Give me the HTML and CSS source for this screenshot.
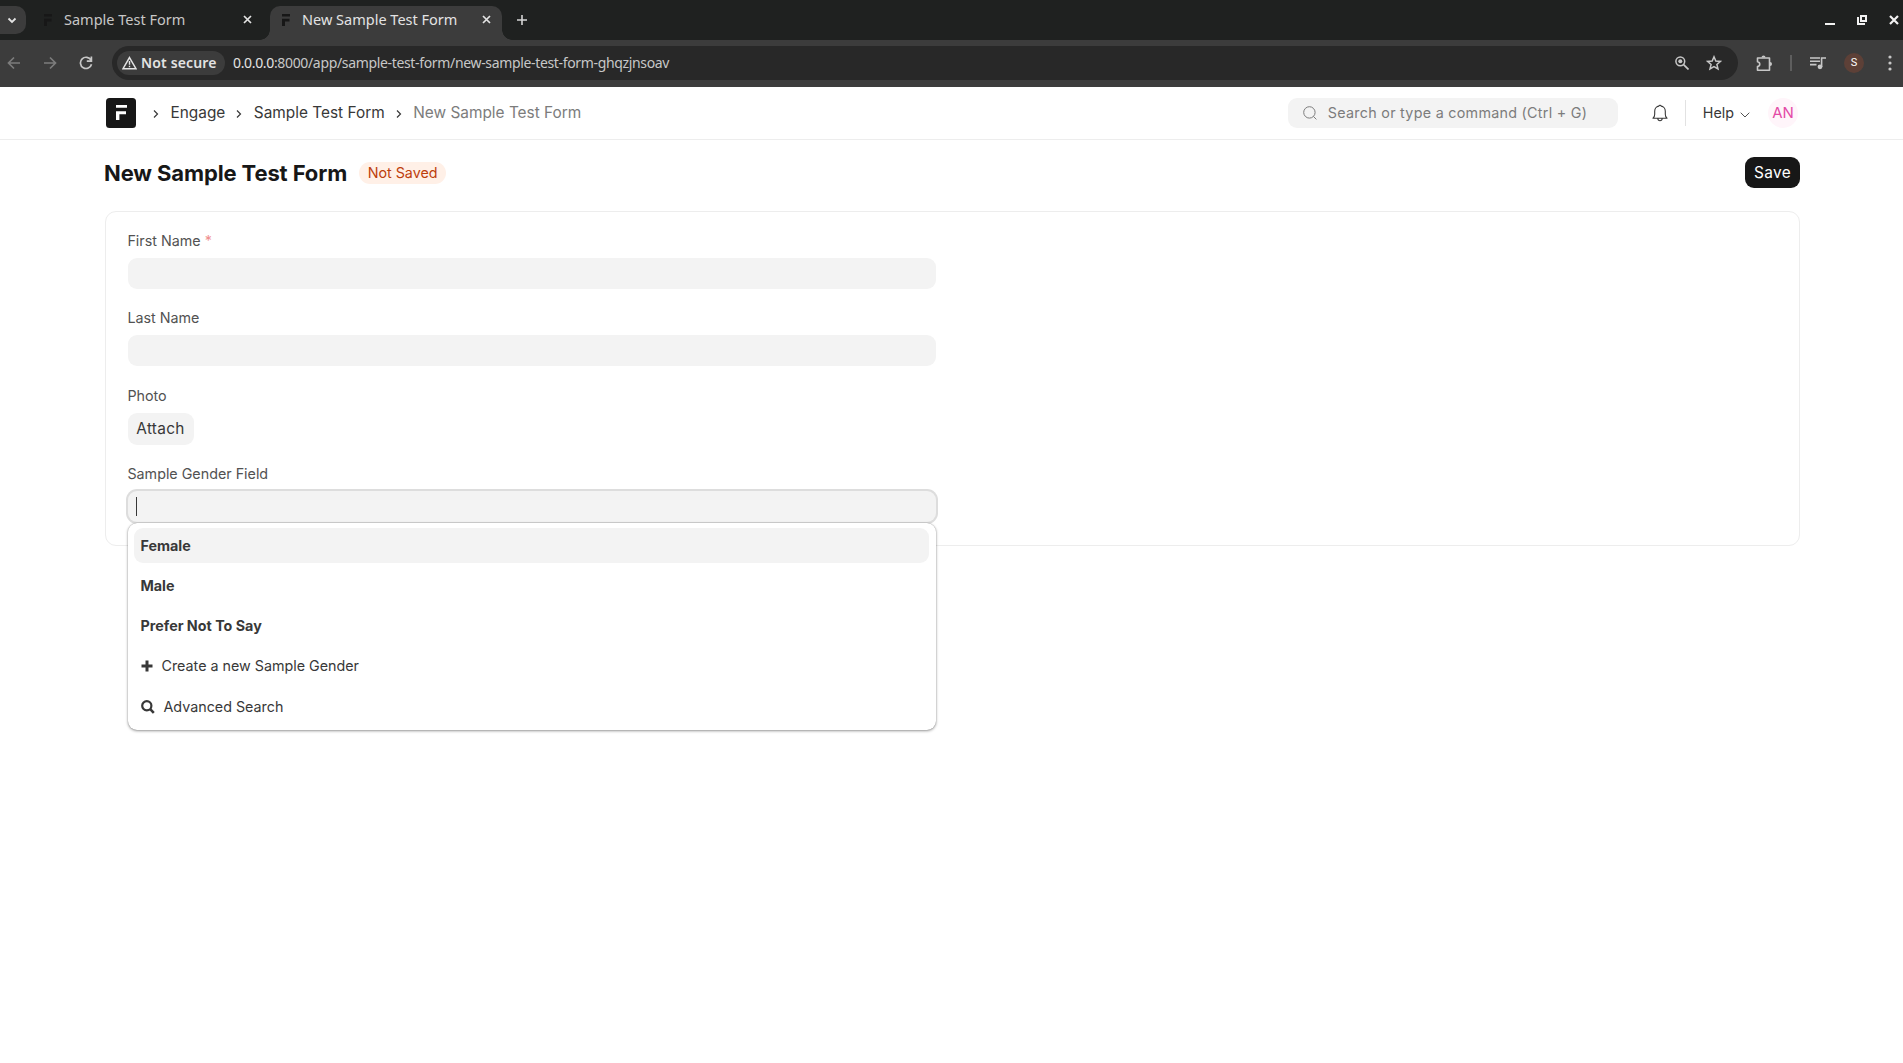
FILE: index.html
```html
<!DOCTYPE html>
<html lang="en">
<head>
  <meta charset="UTF-8">
  <title>New Sample Test Form</title>
  <link rel="stylesheet" href="styles.css">
</head>
<body>

  <div class="browser">
    <div class="tab-strip">
      <button class="tab-search">
        <svg width="10" height="7" viewBox="0 0 10 7"><path d="M1.5 1.5 5 5l3.5-3.5" fill="none" stroke="#e3e3e3" stroke-width="1.8"/></svg>
      </button>
      <div class="tab">
        <svg class="favicon" width="9" height="12" viewBox="0 0 9 12"><path d="M0 0h8v2.6H0zM0 4.8h7.5v2.6H3V12H0z" fill="#171717"/></svg>
        <span class="tab-title">Sample Test Form</span>
        <svg class="tab-close" width="9" height="9" viewBox="0 0 9 9"><path d="M1 1l7 7M8 1L1 8" stroke="#e3e3e3" stroke-width="1.7"/></svg>
      </div>
      <div class="tab active">
        <svg class="favicon" width="9" height="12" viewBox="0 0 9 12"><path d="M0 0h8v2.6H0zM0 4.8h7.5v2.6H3V12H0z" fill="#171717"/></svg>
        <span class="tab-title">New Sample Test Form</span>
        <svg class="tab-close" width="9" height="9" viewBox="0 0 9 9"><path d="M1 1l7 7M8 1L1 8" stroke="#e3e3e3" stroke-width="1.7"/></svg>
      </div>
      <svg class="new-tab" width="10" height="10" viewBox="0 0 10 10"><path d="M5 0v10M0 5h10" stroke="#d5d5d5" stroke-width="1.6"/></svg>
      <div class="window-buttons">
        <svg width="10" height="10" viewBox="0 0 10 10"><path d="M0 9h10" stroke="#f2f2f2" stroke-width="2"/></svg>
        <svg width="10" height="10" viewBox="0 0 10 10"><path d="M4 1h5v5H4zM1 2v7h7" fill="none" stroke="#f2f2f2" stroke-width="2"/></svg>
        <svg width="10" height="10" viewBox="0 0 10 10"><path d="M1 1l8 8M9 1L1 9" stroke="#f2f2f2" stroke-width="2.2"/></svg>
      </div>
    </div>

    <div class="toolbar">
      <svg class="nav-icon dim" width="14" height="14" viewBox="0 0 14 14"><path d="M13 7H2M7 1.5 1.5 7 7 12.5"/></svg>
      <svg class="nav-icon dim" width="14" height="14" viewBox="0 0 14 14"><path d="M1 7h11M7 1.5 12.5 7 7 12.5"/></svg>
      <svg class="nav-icon" width="14" height="14" viewBox="0 0 14 14"><path d="M12 4.2A5.6 5.6 0 1 0 12.5 8.2M12.4 .6v4.6H7.8"/></svg>
      <div class="omnibox">
        <span class="security">
          <svg width="15" height="14" viewBox="0 0 15 14"><path d="M7.5 1.6 14 12.7H1z" fill="none" stroke="#e3e3e3" stroke-width="1.5"/><path d="M7.5 5v3.8M7.5 9.8v1.5" stroke="#e3e3e3" stroke-width="1.4"/></svg>
          <span class="security-text">Not secure</span>
        </span>
        <span class="url"><b>0.0.0.0</b>:8000/app/sample-test-form/new-sample-test-form-ghqzjnsoav</span>
        <svg class="zoom-icon" width="14" height="14" viewBox="0 0 14 14"><circle cx="5.3" cy="5.3" r="4.4" fill="none" stroke="#c7c7c7" stroke-width="1.5"/><path d="M8.6 8.6l4.9 4.9" stroke="#c7c7c7" stroke-width="1.7"/><circle cx="5.3" cy="5.3" r="2" fill="#c7c7c7"/></svg>
        <svg width="16" height="16" viewBox="0 0 16 16"><path d="M8 1.8 9.8 6l4.6.4-3.5 3 1.1 4.5L8 11.5l-4 2.4 1.1-4.5-3.5-3L6.2 6z" fill="none" stroke="#c7c7c7" stroke-width="1.5"/></svg>
      </div>
      <div class="toolbar-actions">
        <svg width="17" height="17" viewBox="0 0 17 17"><path d="M1.5 3h12v12.3h-12v-3.8c3-.5 3-4.2 0-4.7z" fill="none" stroke="#c7c7c7" stroke-width="1.6" stroke-linejoin="round"/><path d="M5.5 2.5a2 2 0 0 1 4 0zM14 7a2 2 0 0 1 0 4z" fill="#c7c7c7"/></svg>
        <span class="toolbar-divider"></span>
        <svg width="16" height="14" viewBox="0 0 16 14"><path d="M0 2h10M0 5.3h10M0 8.6h6.5M11.6 11V2H16" fill="none" stroke="#c7c7c7" stroke-width="1.6"/><circle cx="10" cy="10.8" r="2.4" fill="#c7c7c7"/></svg>
        <span class="profile">S</span>
        <svg class="menu-dots" width="4" height="16" viewBox="0 0 4 16"><circle cx="2" cy="2" r="1.6" fill="#c7c7c7"/><circle cx="2" cy="8" r="1.6" fill="#c7c7c7"/><circle cx="2" cy="14" r="1.6" fill="#c7c7c7"/></svg>
      </div>
    </div>
  </div>

  <header class="navbar">
    <div class="breadcrumbs">
      <svg class="logo" width="30" height="30" viewBox="0 0 30 30"><rect width="30" height="30" rx="3.5" fill="#171717"/><path d="M10 7h11v2.8H10zM10 13.3h10v2.9h-6.6V22H10z" fill="#fff"/></svg>
      <svg class="crumb-arrow" width="6" height="8" viewBox="0 0 6 8"><path d="M1 .5 4.5 4 1 7.5"/></svg>
      <a class="crumb">Engage</a>
      <svg class="crumb-arrow" width="6" height="8" viewBox="0 0 6 8"><path d="M1 .5 4.5 4 1 7.5"/></svg>
      <a class="crumb">Sample Test Form</a>
      <svg class="crumb-arrow" width="6" height="8" viewBox="0 0 6 8"><path d="M1 .5 4.5 4 1 7.5"/></svg>
      <a class="crumb current">New Sample Test Form</a>
    </div>
    <div class="navbar-right">
      <div class="search-bar">
        <svg width="14" height="14" viewBox="0 0 14 14"><circle cx="6.4" cy="6.4" r="5.7" fill="none" stroke="#7c7c7c"/><path d="M10.4 10.4l3 3" stroke="#7c7c7c"/></svg>
        <span class="search-text">Search or type a command (Ctrl + G)</span>
      </div>
      <svg class="bell" width="16" height="18" viewBox="0 0 16 18"><path d="M1 14.3c1.3-1 1.7-2 1.7-4V7.2C2.7 4 5 2.3 6.8 2.1 7 1 9 1 9.2 2.1 11 2.3 13.3 4 13.3 7.2v3.1c0 2 .4 3 1.7 4zM5.8 14.5c.2 3 4.2 3 4.4 0" fill="none" stroke="#383838" stroke-width="1.1" stroke-linejoin="round"/></svg>
      <span class="nav-divider"></span>
      <span class="help">Help</span>
      <svg class="help-arrow" width="10" height="6" viewBox="0 0 10 6"><path d="M.7.7 5 5 9.3.7" fill="none" stroke="#525252"/></svg>
      <span class="avatar">AN</span>
    </div>
  </header>

  <div class="page-head">
    <h1 class="title">New Sample Test Form</h1>
    <span class="indicator-pill">Not Saved</span>
    <button class="btn-save">Save</button>
  </div>

  <main class="form-card">
    <div class="form-column">
      <div class="field">
        <label class="label">First Name <span class="reqd">*</span></label>
        <div class="input"></div>
      </div>
      <div class="field field-last">
        <label class="label">Last Name</label>
        <div class="input"></div>
      </div>
      <div class="field field-photo">
        <label class="label">Photo</label>
        <button class="btn-attach">Attach</button>
      </div>
      <div class="field field-link">
        <label class="label">Sample Gender Field</label>
        <div class="input focused"><span class="caret"></span></div>
        <ul class="dropdown">
          <li class="option selected"><strong>Female</strong></li>
          <li class="option"><strong>Male</strong></li>
          <li class="option"><strong>Prefer Not To Say</strong></li>
          <li class="option">
            <svg class="plus-icon" width="12" height="12" viewBox="0 0 12 12"><path d="M6 .5v11M.5 6h11" stroke="#383838" stroke-width="3"/></svg>
            <span>Create a new Sample Gender</span>
          </li>
          <li class="option option-search">
            <svg class="find-icon" width="14" height="14" viewBox="0 0 14 14"><circle cx="5.8" cy="5.8" r="4.6" fill="none" stroke="#383838" stroke-width="2.2"/><path d="M9.2 9.2l3.6 3.6" stroke="#383838" stroke-width="2.6"/></svg>
            <span>Advanced Search</span>
          </li>
        </ul>
      </div>
    </div>
  </main>

</body>
</html>
```
FILE: styles.css
```css
* {
  box-sizing: border-box;
}

body {
  margin: 0;
  min-height: 100vh;
  background: #fff;
  color: #383838;
  font-family: Inter, sans-serif;
  font-size: 15.4px;
}

svg {
  display: block;
  flex-shrink: 0;
}

button {
  border: none;
  font-family: inherit;
}

/* browser window */
.browser {
  height: 87px;
  background: #3c3c3c;
  font-family: "Noto Sans", sans-serif;
}

.tab-strip {
  height: 40px;
  display: flex;
  align-items: center;
  background: #1f2120;
}

.tab-search {
  width: 26px;
  height: 28px;
  padding: 0 0 0 7px;
  background: #3c3c3c;
  border-radius: 0 10px 10px 0;
}

.tab {
  width: 244px;
  height: 34px;
  margin-top: 6px;
  padding: 0 18px 7px 18px;
  display: flex;
  align-items: center;
  color: #c7c7c7;
  font-size: 14.5px;
  line-height: 20px;
  white-space: nowrap;
}

.tab.active {
  position: relative;
  width: 232px;
  padding: 0 11px 7px 12px;
  background: #3c3c3c;
  border-radius: 10px 10px 0 0;
  color: #e3e3e3;
}

/* curved feet of the active tab */
.tab.active::before,
.tab.active::after {
  content: "";
  position: absolute;
  bottom: 0;
  width: 10px;
  height: 10px;
}

.tab.active::before {
  left: -10px;
  background: radial-gradient(circle at 0 0, #1f2120 9.5px, #3c3c3c 10px);
}

.tab.active::after {
  right: -10px;
  background: radial-gradient(circle at 100% 0, #1f2120 9.5px, #3c3c3c 10px);
}

.tab-title {
  padding-bottom: 1px;
}

.favicon {
  margin-right: 11px;
}

.tab-close {
  margin-left: auto;
}

.new-tab {
  margin-left: 15px;
}

.window-buttons {
  margin-left: auto;
  padding: 0 4px 1px 0;
  display: flex;
  gap: 22px;
}

.toolbar {
  height: 46px;
  padding-left: 7px;
  display: flex;
  align-items: center;
}

.nav-icon {
  margin-right: 22px;
  fill: none;
  stroke: #c7c7c7;
  stroke-width: 1.7;
}

.nav-icon.dim {
  stroke: #7c7c7c;
}

.omnibox {
  width: 1626px;
  height: 34px;
  margin-left: -3px;
  padding: 0 16px 0 5px;
  display: flex;
  align-items: center;
  background: #282828;
  border-radius: 17px;
}

.security {
  width: 108px;
  height: 24px;
  padding-left: 5px;
  display: flex;
  align-items: center;
  gap: 4px;
  background: #3c3c3c;
  border-radius: 12px;
  color: #e3e3e3;
  font-size: 14px;
  font-weight: 600;
  letter-spacing: 0.15px;
  white-space: nowrap;
}

.security-text,
.url {
  padding-bottom: 1px;
}

.url {
  margin-left: 8px;
  color: #c7c7c7;
  font-size: 14px;
  letter-spacing: -0.34px;
}

.url b {
  color: #e3e3e3;
  font-weight: 400;
}

.zoom-icon {
  margin-left: auto;
  margin-right: 17px;
}

.toolbar-actions {
  margin-left: 18px;
  display: flex;
  align-items: center;
  gap: 18px;
}

.toolbar-divider {
  width: 2px;
  height: 16px;
  margin-left: -1px;
  background: #5e5e5e;
}

.profile {
  width: 20px;
  height: 20px;
  border-radius: 50%;
  background: #5d4037;
  color: #fff;
  font-family: Roboto, sans-serif;
  font-size: 11px;
  line-height: 20px;
  text-align: center;
}

.menu-dots {
  margin-left: 6px;
}

/* navbar */
.navbar {
  height: 53px;
  padding: 0 105px 0 106px;
  display: flex;
  align-items: center;
  justify-content: space-between;
  border-bottom: 1px solid #ededed;
}

.breadcrumbs,
.navbar-right {
  display: flex;
  align-items: center;
}

.logo {
  margin-right: 6px;
}

.crumb-arrow {
  margin: 1px 11.5px 0 11px;
  fill: none;
  stroke: #383838;
  stroke-width: 1.2;
}

.crumb {
  line-height: 20px;
  white-space: nowrap;
}

.crumb.current {
  color: #7c7c7c;
}

.search-bar {
  width: 330px;
  height: 30px;
  padding-left: 15px;
  display: flex;
  align-items: center;
  gap: 11px;
  background: #f3f3f3;
  border-radius: 9px;
  color: #7c7c7c;
  font-size: 14.3px;
  letter-spacing: 0.02em;
  white-space: nowrap;
}

.search-text {
  padding-bottom: 1px;
}

.bell {
  margin-left: 34px;
}

.nav-divider {
  width: 1px;
  height: 26px;
  margin: 0 17px;
  background: #e2e2e2;
}

.help {
  padding-bottom: 1px;
  font-size: 14.3px;
}

.help-arrow {
  margin: 3px 18px 0 6px;
}

.avatar {
  width: 30px;
  height: 30px;
  border-radius: 50%;
  background: #fff5fa;
  color: #e34aa6;
  font-size: 15px;
  line-height: 30px;
  text-align: center;
}

/* page head */
.page-head {
  height: 71px;
  padding: 0 103px 6px 104px;
  display: flex;
  align-items: center;
}

.title {
  margin: 1px 0 0;
  color: #171717;
  font-size: 22px;
  font-weight: 700;
  letter-spacing: -0.12px;
}

.indicator-pill {
  height: 22px;
  margin: 1px 0 0 12px;
  padding: 0 8.5px;
  border-radius: 11px;
  background: #fff0e7;
  color: #bd3e0c;
  font-size: 14.3px;
  line-height: 22px;
}

.btn-save {
  width: 55px;
  height: 31px;
  margin-left: auto;
  padding: 0;
  background: #171717;
  border-radius: 9px;
  color: #fff;
  font-size: 15.4px;
  letter-spacing: 0.02em;
}

/* form */
.form-card {
  height: 335px;
  margin: 0 103px 0 105px;
  padding: 19px 22px;
  border: 1px solid #ededed;
  border-radius: 11px;
}

.form-column {
  width: 808px;
}

.field {
  height: 77px;
}

.field-last,
.field-photo {
  height: 78px;
}

.label {
  height: 27px;
  display: block;
  margin-left: -0.6px;
  color: #525252;
  font-size: 14.3px;
  line-height: 20px;
}

.reqd {
  color: #f09090;
}

.input {
  height: 31px;
  padding: 6px 8px;
  background: #f3f3f3;
  border-radius: 9px;
}

.btn-attach {
  width: 66px;
  height: 32px;
  padding: 0 1px 1px 0;
  display: block;
  background: #f3f3f3;
  border-radius: 9px;
  color: #383838;
  font-size: 15.4px;
  letter-spacing: 0.02em;
}

.field-link {
  position: relative;
}

.input.focused {
  box-shadow: 0 0 0 2px #dddddd;
}

.caret {
  width: 1px;
  height: 19px;
  display: block;
  background: #383838;
}

.dropdown {
  position: absolute;
  top: 59px;
  left: 0;
  width: 808px;
  height: 207px;
  margin: 0;
  padding: 5px 7px 5px 6px;
  list-style: none;
  background: #fff;
  border-radius: 9px;
  box-shadow: 0 0 1px rgba(0, 0, 0, 0.35), 0 1px 3px rgba(0, 0, 0, 0.4);
}

.option {
  height: 35px;
  margin-bottom: 5px;
  padding-left: 6.5px;
  display: flex;
  align-items: center;
  border-radius: 9px;
  font-size: 14.3px;
}

.option strong {
  font-weight: 650;
}

.option.selected {
  background: #f3f3f3;
}

.option-search {
  height: 37px;
}

.plus-icon,
.find-icon {
  margin-right: 9px;
}
```
